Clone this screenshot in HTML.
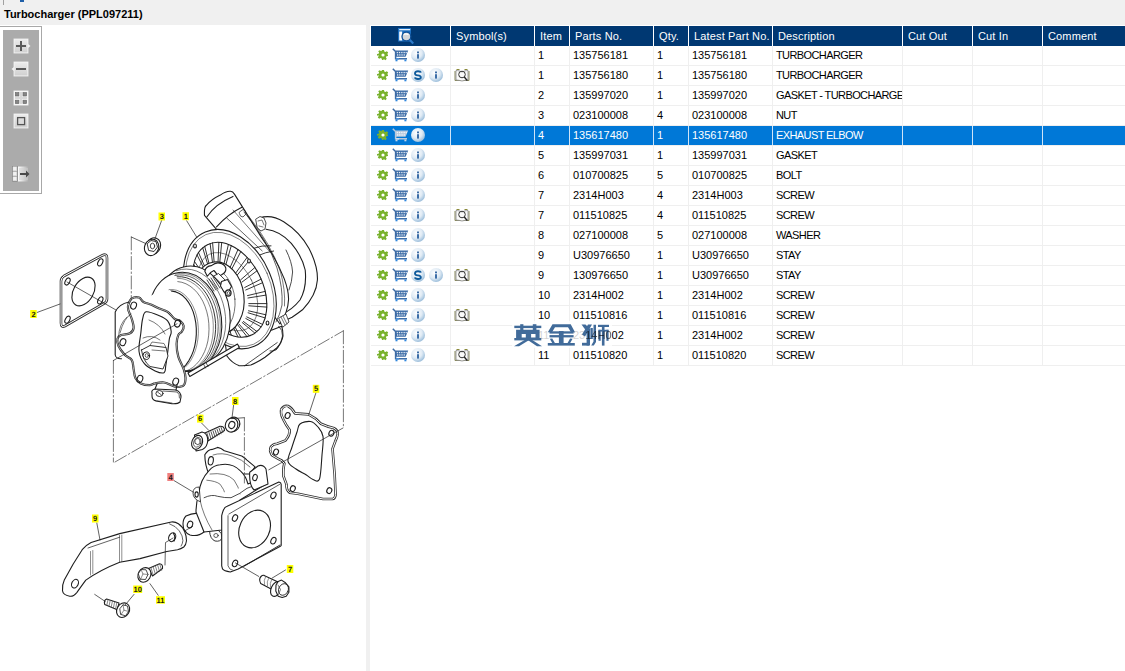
<!DOCTYPE html>
<html><head><meta charset="utf-8">
<style>
html,body{margin:0;padding:0;}
body{width:1125px;height:671px;position:relative;overflow:hidden;background:#f0f0f0;font-family:"Liberation Sans",sans-serif;}
.abs{position:absolute;}
#title{position:absolute;left:4px;top:8px;font-size:11px;font-weight:bold;color:#000;letter-spacing:0px;white-space:nowrap;}
#left{position:absolute;left:0;top:25px;width:366px;height:646px;background:#fff;overflow:hidden;}
#right{position:absolute;left:370px;top:25px;width:755px;height:646px;background:#fff;}
.hc{position:absolute;top:26px;height:20px;background:#003872;color:#fff;font-size:11px;line-height:20px;padding-left:5px;letter-spacing:0.15px;box-sizing:border-box;white-space:nowrap;overflow:hidden;}
.tc{position:absolute;height:19px;font-size:11px;line-height:19px;color:#000;padding-left:3px;box-sizing:border-box;white-space:nowrap;overflow:hidden;}
.sw{color:#fff;}
.rl{position:absolute;left:371px;width:754px;height:1px;background:#efefef;}
.sel{position:absolute;left:371px;width:754px;height:19px;background:#0078d7;}
.vl{position:absolute;top:46px;height:319px;width:1px;background:#efefef;}
.vls{position:absolute;top:126px;height:19px;width:1px;background:#d0e4f7;}
.ic{position:absolute;overflow:visible;}
</style></head><body>
<svg width="0" height="0" style="position:absolute">
<defs>
<radialGradient id="cg" cx="40%" cy="35%" r="65%">
<stop offset="0" stop-color="#ffffff"/><stop offset="0.6" stop-color="#dfeaf4"/><stop offset="1" stop-color="#9fc0dc"/>
</radialGradient>
<g id="gear">
<path fill="#79b22e" d="M4 0h2l.3 1.6 1.2.5 1.3-.9 1.4 1.4-.9 1.3.5 1.2L10 4v2l-1.6.3-.5 1.2.9 1.3-1.4 1.4-1.3-.9-1.2.5L6 10H4l-.3-1.6-1.2-.5-1.3.9L-.2 7.4l.9-1.3-.5-1.2L-1 6V4l1.6-.3.5-1.2-.9-1.3L1.6.2l1.3.9 1.2-.5z"/>
<circle cx="5" cy="5" r="1.6" fill="#fff"/>
</g>
<g id="cart">
<path d="M0.8 0.8 L3 3" stroke="#3a6aa5" stroke-width="1.5" fill="none"/>
<path d="M2.6 2.6 H16.2 L13.6 8.8 H4 Z" fill="#3d6ca6"/>
<g fill="#e8eef6">
<rect x="4.6" y="3.9" width="1.3" height="1.3"/><rect x="6.9" y="3.9" width="1.3" height="1.3"/><rect x="9.2" y="3.9" width="1.3" height="1.3"/><rect x="11.5" y="3.9" width="1.3" height="1.3"/><rect x="13.6" y="3.9" width="1.2" height="1.3"/>
<rect x="5" y="6.3" width="1.3" height="1.3"/><rect x="7.2" y="6.3" width="1.3" height="1.3"/><rect x="9.4" y="6.3" width="1.3" height="1.3"/><rect x="11.6" y="6.3" width="1.3" height="1.3"/>
</g>
<path d="M3.6 3 V10.8 H15" stroke="#3d6ca6" stroke-width="1.5" fill="none"/>
<path d="M4 10.8 H7" stroke="#4a90d8" stroke-width="1.5"/>
<rect x="3.5" y="11.5" width="2" height="1.8" fill="#2f86dc"/>
<rect x="12.4" y="11.5" width="2" height="1.8" fill="#2f86dc"/>
</g>
<g id="cartS">
<path d="M0.8 0.8 L3 3" stroke="#b8c8dc" stroke-width="1.5" fill="none"/>
<path d="M2.6 2.6 H16.2 L13.6 8.8 H4 Z" fill="#b8c8dc"/>
<g fill="#f4f8fc">
<rect x="4.6" y="3.9" width="1.3" height="1.3"/><rect x="6.9" y="3.9" width="1.3" height="1.3"/><rect x="9.2" y="3.9" width="1.3" height="1.3"/><rect x="11.5" y="3.9" width="1.3" height="1.3"/><rect x="13.6" y="3.9" width="1.2" height="1.3"/>
<rect x="5" y="6.3" width="1.3" height="1.3"/><rect x="7.2" y="6.3" width="1.3" height="1.3"/><rect x="9.4" y="6.3" width="1.3" height="1.3"/><rect x="11.6" y="6.3" width="1.3" height="1.3"/>
</g>
<path d="M3.6 3 V10.8 H15" stroke="#b8c8dc" stroke-width="1.5" fill="none"/>
<path d="M4 10.8 H7" stroke="#d0dcea" stroke-width="1.5"/>
<rect x="3.5" y="11.5" width="2" height="1.8" fill="#c8d6e6"/>
<rect x="12.4" y="11.5" width="2" height="1.8" fill="#c8d6e6"/>
</g>
<g id="cI"><circle cx="7" cy="7" r="7" fill="url(#cg)"/><rect x="6.1" y="3.5" width="1.8" height="1.8" fill="#2a5f9e"/><rect x="6.1" y="6.2" width="1.8" height="4.4" fill="#2a5f9e"/></g>
<g id="cS"><circle cx="7" cy="7" r="7" fill="url(#cg)"/><path d="M9.8 4.6 Q9.5 3.2 7 3.2 Q4 3.2 4 5.4 Q4 7 6.8 7.4 Q9.8 7.8 9.8 9.2 Q9.8 11 7 11 Q4.2 11 4 9.4" fill="none" stroke="#0d5a9c" stroke-width="1.9"/></g>
<g id="book">
<path d="M1 3v9.5h14V3" fill="#eee" stroke="#8a8a5a" stroke-width="1"/>
<path d="M2.5 1.5h3M10.5 1.5h3" stroke="#8a8a3a" stroke-width="1"/>
<path d="M2 2.5c2 0 4 .5 6 1.5 2-1 4-1.5 6-1.5v9.5c-2 0-4 .5-6 1-2-.5-4-1-6-1z" fill="#fafafa" stroke="#888" stroke-width=".8"/>
<circle cx="8" cy="6.5" r="3.3" fill="none" stroke="#333" stroke-width="1"/>
<path d="M10.3 9l3 3.6" stroke="#222" stroke-width="1.4"/>
</g>
</defs></svg>

<div class="abs" style="left:3px;top:0;width:1px;height:5px;background:#a0a0a0"></div>
<div class="abs" style="left:20px;top:0;width:4px;height:2px;background:#1f5fa8"></div>
<div id="title">Turbocharger (PPL097211)</div>
<div id="left">
<svg style="position:absolute;left:0;top:-25px" width="366" height="671" viewBox="0 0 366 671">
<g fill="none" stroke="#1e1e1e" stroke-width="1.1" stroke-linejoin="round" stroke-linecap="round">
<path fill="#fff" d="M259.6 218 Q271 214 283.7 221.7 Q300 232 309 248.4 Q318 266 317.4 280 Q316.5 295 302.5 309.8 Q297 314 292.1 317.3 L284 321 L270 340 L230 300 L230 240 Z" stroke="none"/>
<path d="M259.6 218 Q271 214 283.7 221.7 Q300 232 309 248.4 Q318 266 317.4 280 Q316.5 295 302.5 309.8 Q297 314 292.1 317.3 L284 321"/>
<path d="M266 229.3 Q280 231 291.3 243.3 Q302 256 305.2 270 Q307 288 300 300 Q292 310 282 314"/>
<path d="M286 250 Q292 262 292.6 272 Q292 282 289 290" stroke-width="0.8"/>
<path fill="#fff" d="M256 219 L260 216.5 L264 218 L266 223 L265 229 L261 231 L257.5 228 Z" stroke-width="0.8"/>
<path d="M258 221 L262 220 L264 225 M259 226 L263 227" stroke-width="0.6"/>
<path fill="#fff" d="M204.5 215.4 Q204 207 206.4 205.3 Q212 199 220.3 195.1 Q226 191 230.5 191.3 Q233 191.5 234.3 193.9 L261.3 237.1 Q276 258 284.3 278.9 Q289 292 288.5 300 Q288 312 280 324 L262 300 L216.5 229.3 Z"/>
<path d="M244 212 Q268 240 277 268 Q283 288 282 305 Q280 315 276 322" stroke-width="0.7"/>
<path d="M248.5 216 Q271 244 280.5 272 Q285.5 290 284.5 306" stroke-width="0.6"/>
<path d="M207 216.7 Q215 204 233 196.4"/>
<path d="M216.5 226.8 Q228 214 241.9 207.2"/>
<path d="M226.7 218 L262.2 250.9" stroke-width="0.7"/>
<path d="M233 210 L270 252" stroke-width="0.6"/>
<path d="M239.5 212 L243 209.5 Q246 210 246 214 L243 217 Q240 217 239.5 214 Z" stroke-width="0.7"/>
<path d="M253.3 248.4 Q262 245 271 245.8 M257 256 Q266 252 273.6 251" stroke-width="0.9"/>
<path fill="#fff" d="M224.5 337 L226.9 356 Q232 363 238.8 365.6 Q245 366 250.8 365 Q258 362 265 357.2 L277 347.7 Q282 342 283 335.8 Q283 330 281.7 326.2 L272 330 Z"/>
<path d="M244.5 365.8 L277.2 342.6 M270 351 Q276 352 279 346" stroke-width="0.8"/>
<path d="M278.7 326.2 Q283 330 282.5 336 Q282 344 276 350" stroke-width="0.8"/>
<path fill="#fff" d="M279 318 L286 314 L289 322 L283 327 Z" stroke-width="0.8"/>
<path d="M281 317 L285 325 M283 316 L287 324" stroke-width="0.6"/>
<ellipse cx="229.8" cy="289.1" rx="42.9" ry="62.2" transform="rotate(-23.2 229.8 289.1)" fill="#fff"/>
<ellipse cx="229.8" cy="289.4" rx="40.6" ry="59.8" transform="rotate(-23.6 229.8 289.4)" stroke-width="0.5"/>
<ellipse cx="229.8" cy="289.7" rx="32.9" ry="50.3" transform="rotate(-26.4 229.8 289.7)" fill="#fff"/>
<path d="M194.5 288.0 L204.1 291.8 M193.7 284.3 L203.6 289.4 M192.8 275.8 L202.8 283.8 M192.8 272.3 L202.8 281.6 M193.7 264.6 L203.1 276.6 M194.5 261.5 L203.5 274.6 M197.1 255.0 L204.9 270.5 M198.5 252.6 L205.8 268.9 M202.7 247.9 L208.2 265.9 M204.7 246.3 L209.4 264.9 M210.1 243.5 L212.6 263.3 M212.6 242.8 L214.2 262.9 M218.9 242.4 L218.0 262.8 M221.7 242.6 L219.7 263.0 M228.4 244.4 L223.9 264.3 M231.3 245.6 L225.7 265.2 M238.0 249.5 L229.9 267.9 M240.8 251.6 L231.6 269.3 M247.1 257.4 L235.6 273.2 M249.6 260.2 L237.2 275.1 M254.9 267.5 L240.6 279.9 M257.0 270.8 L242.0 282.1 M261.1 279.1 L244.7 287.5 M262.6 282.7 L245.7 290.0 M265.1 291.4 L247.5 295.6 M265.9 295.1 L248.0 298.0 M266.8 303.6 L248.8 303.6 M266.8 307.1 L248.8 305.8 M265.9 314.8 L248.5 310.8 M265.1 317.9 L248.1 312.8 M262.5 324.4 L246.7 316.9 M261.1 326.8 L245.8 318.5 M256.9 331.5 L243.4 321.5 M254.9 333.1 L242.2 322.5 M249.5 335.9 L239.0 324.1 M247.0 336.6 L237.4 324.5 M240.7 337.0 L233.6 324.6 M237.9 336.8 L231.9 324.4 M231.2 335.0 L227.7 323.1 M228.3 333.8 L225.9 322.2 M221.6 329.9 L221.7 319.5 M218.8 327.8 L220.0 318.1 M212.5 322.0 L216.0 314.2 M210.0 319.2 L214.4 312.3 M204.7 311.9 L211.0 307.5 M202.6 308.6 L209.6 305.3 M198.5 300.3 L206.9 299.9 M197.0 296.7 L205.9 297.4" stroke-width="0.9"/>
<ellipse cx="227.8" cy="291.7" rx="26.32" ry="41.748999999999995" transform="rotate(-26.4 227.8 291.7)" stroke-width="0.5"/>
<ellipse cx="218.2" cy="297.9" rx="25.8" ry="36.1" transform="rotate(-6.7 218.2 297.9)" fill="#fff"/>
<ellipse cx="213" cy="301" rx="22" ry="33" transform="rotate(-5 213 301)" stroke-width="0.6"/>
<ellipse cx="195" cy="246" rx="1.4" ry="2" fill="#fff"/>
<ellipse cx="249" cy="261" rx="1.4" ry="2" fill="#fff"/>
<ellipse cx="267.5" cy="323" rx="1.4" ry="2" fill="#fff"/>
<ellipse cx="193" cy="315.5" rx="37" ry="49.6" transform="rotate(-6.7 193 315.5)" fill="#fff"/>
<path d="M176.4 270.7 L181.4 269.4 L186.5 269.1 L191.6 269.6 L196.7 271.1 L201.6 273.5 L206.3 276.8 L210.6 280.8 L214.5 285.6 L217.9 291.0 L220.8 296.9 L223.0 303.3 L224.6 309.9 L225.5 316.7 L225.7 323.5 L225.2 330.2 L223.9 336.8 L222.0 342.9 L219.5 348.6 L216.4 353.7 L212.7 358.2 L208.6 361.9 L204.1 364.7 L199.3 366.7 L194.3 367.8" stroke-width="0.6"/>
<ellipse cx="184.6" cy="321.7" rx="37" ry="49.6" transform="rotate(-6.7 184.6 321.7)" fill="#fff"/>
<path d="M175.3 274.1 L180.2 273.4 L185.3 273.7 L190.3 274.8 L195.2 276.9 L199.8 279.9 L204.2 283.7 L208.2 288.2 L211.7 293.3 L214.7 299.1 L217.0 305.2 L218.8 311.7 L219.9 318.4 L220.3 325.1 L220.0 331.8 L219.0 338.4 L217.3 344.6 L215.0 350.4 L212.1 355.6 L208.6 360.3 L204.7 364.2 L200.4 367.3 L195.8 369.5 L190.9 370.9 L185.9 371.3" stroke-width="0.5"/>
<path d="M174.8 275.5 L179.6 274.9 L184.5 275.2 L189.4 276.4 L194.2 278.5 L198.7 281.5 L202.9 285.3 L206.8 289.8 L210.1 294.9 L213.0 300.6 L215.3 306.7 L216.9 313.1 L217.9 319.7 L218.2 326.3 L217.9 333.0 L216.8 339.4 L215.1 345.5 L212.8 351.2 L210.0 356.3 L206.6 360.9 L202.7 364.7 L198.5 367.7 L193.9 369.8 L189.1 371.1 L184.3 371.5" stroke-width="0.7"/>
<path d="M177.1 276.8 L181.7 276.8 L186.3 277.7 L190.9 279.5 L195.2 282.0 L199.3 285.3 L203.1 289.3 L206.5 293.9 L209.4 299.1 L211.8 304.8 L213.7 310.8 L214.9 317.0 L215.6 323.4 L215.6 329.7 L215.0 336.0 L213.8 342.1 L212.0 347.8 L209.7 353.1 L206.8 357.9 L203.5 362.1 L199.7 365.6 L195.7 368.4 L191.3 370.3 L186.8 371.4 L182.2 371.7" stroke-width="0.9"/>
<path d="M177.6 278.4 L182.0 278.7 L186.4 279.8 L190.7 281.8 L194.9 284.5 L198.7 287.9 L202.2 291.9 L205.3 296.6 L208.0 301.8 L210.2 307.3 L211.8 313.2 L212.9 319.3 L213.3 325.6 L213.2 331.8 L212.5 337.8 L211.3 343.7 L209.4 349.2 L207.1 354.3 L204.2 358.9 L201.0 362.9 L197.3 366.3 L193.4 368.9 L189.2 370.7 L184.8 371.7 L180.4 371.9" stroke-width="0.5"/>
<path d="M177.8 281.6 L181.9 282.3 L186.0 283.8 L189.9 286.0 L193.6 288.9 L197.0 292.4 L200.1 296.6 L202.8 301.2 L205.0 306.3 L206.8 311.8 L208.1 317.5 L208.8 323.3 L209.0 329.3 L208.7 335.2 L207.9 340.9 L206.5 346.4 L204.6 351.6 L202.2 356.4 L199.5 360.6 L196.3 364.3 L192.9 367.4 L189.1 369.7 L185.2 371.3 L181.1 372.2 L177.0 372.3" stroke-width="0.6"/>
<path d="M169.1 289.6 L173.0 289.6 L176.8 290.3 L180.5 291.9 L184.0 294.3 L187.2 297.4 L190.2 301.2 L192.7 305.6 L194.9 310.5 L196.5 315.8 L197.7 321.5 L198.3 327.3 L198.4 333.3 L197.9 339.2 L196.9 344.9 L195.4 350.4 L193.4 355.5 L191.0 360.1 L188.2 364.1 L185.0 367.4 L181.6 370.1 L177.9 371.9 L174.2 373.0 L170.3 373.2 L166.5 372.6" stroke-width="0.5"/>
<path d="M168.5 291.1 L172.2 291.1 L175.9 291.9 L179.4 293.5 L182.8 295.8 L185.9 298.9 L188.7 302.7 L191.2 307.1 L193.2 311.9 L194.7 317.2 L195.8 322.8 L196.3 328.5 L196.3 334.4 L195.8 340.2 L194.8 345.8 L193.3 351.1 L191.3 356.1 L188.9 360.6 L186.1 364.6 L183.1 367.8 L179.7 370.4 L176.1 372.2 L172.5 373.2 L168.8 373.4 L165.1 372.7"/>
<path d="M207 280 L214 291 M209 279 L216 290 M211 278 L218 289 M213 277 L220 288" stroke-width="0.9" stroke="#333"/>
<path fill="#fff" d="M204.8 271.3 Q206 266 211.4 265.6 Q216 262 219.6 263.1 Q224.5 264 225.8 268 Q226.5 272 222 274.6 L218.5 276.5 Q215.5 272 213.9 270.5 Q210 272 207.3 276.2 Z"/>
<path fill="#fff" d="M213.9 276 L218.5 273.5 L225.6 280.5 L221.5 283.5 Z" stroke-width="0.9"/>
<path fill="#fff" d="M221.5 281.5 L227.5 279.5 L231.5 286.5 L228.5 291.5 L224 292 L220.5 286 Z"/>
<ellipse cx="228.3" cy="293" rx="2.8" ry="3.1" transform="rotate(0 228.3 293)" fill="#fff"/>
<ellipse cx="228.6" cy="293.2" rx="1.4" ry="1.6" transform="rotate(0 228.6 293.2)" stroke-width="0.7"/>
<path fill="#fff" d="M188 373 L237.5 344 L239.3 347.5 L189.8 376.5 Z"/>
<path d="M206 362.5 L208 366.5 M203.5 364 L205.5 368" stroke-width="0.7"/>
<path fill="#fff" stroke="none" d="M115.2 312 Q116 306 122 304 L150 296 Q160 290 170 290 L178 300 L178 350 L121.5 358.7 Q116 359 115.2 355 Z"/>
<path d="M128.3 304.7 C128.9 302.8 130.0 299.6 131.8 298.4 C133.6 297.2 137.1 296.9 139.0 297.5 C140.9 298.1 141.4 300.8 143.5 302.0 C145.6 303.2 149.0 303.6 151.5 304.7 C154.0 305.8 156.0 307.1 158.7 308.3 C161.4 309.5 164.9 310.0 167.6 311.8 C170.3 313.6 172.7 317.5 174.8 319.0 C176.9 320.5 178.6 319.6 180.1 320.8 C181.6 322.0 183.4 324.3 183.7 326.1 C184.0 327.9 182.8 330.0 181.9 331.5 C181.0 333.0 179.2 333.0 178.3 335.1 C177.4 337.2 176.6 340.4 176.6 344.0 C176.6 347.6 177.1 352.4 178.3 356.6 C179.5 360.8 182.5 365.5 183.7 369.1 C184.9 372.7 185.5 375.3 185.5 378.0 C185.5 380.7 185.2 383.7 183.7 385.2 C182.2 386.7 178.7 387.0 176.6 387.0 C174.5 387.0 173.3 385.9 171.2 385.2 C169.1 384.4 166.7 382.8 164.0 382.5 C161.3 382.2 157.5 382.9 155.1 383.4 C152.7 383.8 152.1 385.2 149.7 385.2 C147.3 385.2 143.2 384.6 140.8 383.4 C138.4 382.2 136.6 380.4 135.4 378.0 C134.2 375.6 134.2 372.1 133.6 369.1 C133.0 366.1 133.3 362.5 131.8 360.1 C130.3 357.7 126.9 357.2 124.7 354.8 C122.5 352.4 119.6 348.5 118.4 345.8 C117.2 343.1 117.0 340.5 117.5 338.7 C118.0 336.9 119.0 336.0 121.1 335.1 C123.2 334.2 127.9 334.5 130.0 333.3 C132.1 332.1 133.3 330.4 133.6 328.0 C133.9 325.6 132.7 322.0 131.8 319.0 C130.9 316.0 128.9 312.4 128.3 310.0 C127.7 307.6 127.7 306.6 128.3 304.7 Z" fill="#fff" stroke="#2a2a2a" stroke-width="2.2"/>
<path d="M128.3 304.7 C128.9 302.8 130.0 299.6 131.8 298.4 C133.6 297.2 137.1 296.9 139.0 297.5 C140.9 298.1 141.4 300.8 143.5 302.0 C145.6 303.2 149.0 303.6 151.5 304.7 C154.0 305.8 156.0 307.1 158.7 308.3 C161.4 309.5 164.9 310.0 167.6 311.8 C170.3 313.6 172.7 317.5 174.8 319.0 C176.9 320.5 178.6 319.6 180.1 320.8 C181.6 322.0 183.4 324.3 183.7 326.1 C184.0 327.9 182.8 330.0 181.9 331.5 C181.0 333.0 179.2 333.0 178.3 335.1 C177.4 337.2 176.6 340.4 176.6 344.0 C176.6 347.6 177.1 352.4 178.3 356.6 C179.5 360.8 182.5 365.5 183.7 369.1 C184.9 372.7 185.5 375.3 185.5 378.0 C185.5 380.7 185.2 383.7 183.7 385.2 C182.2 386.7 178.7 387.0 176.6 387.0 C174.5 387.0 173.3 385.9 171.2 385.2 C169.1 384.4 166.7 382.8 164.0 382.5 C161.3 382.2 157.5 382.9 155.1 383.4 C152.7 383.8 152.1 385.2 149.7 385.2 C147.3 385.2 143.2 384.6 140.8 383.4 C138.4 382.2 136.6 380.4 135.4 378.0 C134.2 375.6 134.2 372.1 133.6 369.1 C133.0 366.1 133.3 362.5 131.8 360.1 C130.3 357.7 126.9 357.2 124.7 354.8 C122.5 352.4 119.6 348.5 118.4 345.8 C117.2 343.1 117.0 340.5 117.5 338.7 C118.0 336.9 119.0 336.0 121.1 335.1 C123.2 334.2 127.9 334.5 130.0 333.3 C132.1 332.1 133.3 330.4 133.6 328.0 C133.9 325.6 132.7 322.0 131.8 319.0 C130.9 316.0 128.9 312.4 128.3 310.0 C127.7 307.6 127.7 306.6 128.3 304.7 Z" stroke="#fff" stroke-width="0.6"/>
<ellipse cx="133.6" cy="305.6" rx="2.8" ry="3.6" transform="rotate(20 133.6 305.6)" />
<ellipse cx="122.9" cy="342.2" rx="2.8" ry="3.6" transform="rotate(20 122.9 342.2)" />
<ellipse cx="177.5" cy="323.5" rx="2.8" ry="3.6" transform="rotate(20 177.5 323.5)" />
<ellipse cx="139.9" cy="378.9" rx="2.8" ry="3.6" transform="rotate(20 139.9 378.9)" />
<ellipse cx="175.7" cy="381.6" rx="2.8" ry="3.6" transform="rotate(20 175.7 381.6)" />
<path d="M146.1 311.8 C148.8 311.2 155.1 313.9 158.7 315.4 C162.3 316.9 165.5 318.1 167.6 320.8 C169.7 323.5 170.9 328.5 171.2 331.5 C171.5 334.5 170.0 335.1 169.4 338.7 C168.8 342.3 168.2 348.5 167.6 353.0 C167.0 357.5 166.4 362.2 165.8 365.5 C165.2 368.8 165.8 371.8 164.0 372.7 C162.2 373.6 158.4 372.4 155.1 370.9 C151.8 369.4 147.1 367.0 144.4 363.7 C141.7 360.4 139.6 356.3 139.0 351.2 C138.4 346.1 140.2 338.7 140.8 333.3 C141.4 327.9 141.7 322.6 142.6 319.0 C143.5 315.4 143.4 312.4 146.1 311.8 Z"/>
<path d="M149 320 Q160 324 165 334 M143 338 Q152 334 160 340" stroke-width="0.6"/>
<path fill="#fff" d="M141.5 350 L150 345.5 L166 347.5 L168 356 L163 369 L150 366.5 Q143 361 141.5 350 Z" stroke-width="0.9"/>
<path d="M150 345.5 L152 342 L164 343.5 L166 347.5 M152 350 L165 351" stroke-width="0.6"/>
<ellipse cx="146.3" cy="355.7" rx="3.3" ry="3.8" transform="rotate(0 146.3 355.7)" fill="#fff" stroke-width="1"/>
<ellipse cx="146.8" cy="355.5" rx="1.6" ry="1.9" transform="rotate(0 146.8 355.5)" stroke-width="0.7"/>
<path d="M120 333 Q124 318 131 314 M118.5 337 Q119 324 127 317" stroke-width="0.6"/>
<path d="M129 302 Q119 304 115.2 312 L115.2 355 Q116 359 121.5 358.7" />

<!-- gasket 2 -->
<path d="M64 276 L102 255.5 Q107 253 107 258 L107 299 Q107 302 104 303.5 L65 326 Q61 328 61 323 L61 281 Q61 278 64 276 Z" stroke-width="2.6" stroke="#333"/>
<path d="M64 276 L102 255.5 Q107 253 107 258 L107 299 Q107 302 104 303.5 L65 326 Q61 328 61 323 L61 281 Q61 278 64 276 Z" stroke="#fff" stroke-width="1.0"/>

<ellipse cx="67.5" cy="281.5" rx="2.2" ry="3.8" transform="rotate(28 67.5 281.5)"/>
<ellipse cx="100.3" cy="262.4" rx="2.2" ry="3.8" transform="rotate(28 100.3 262.4)"/>
<ellipse cx="100.3" cy="300.4" rx="2.2" ry="3.8" transform="rotate(28 100.3 300.4)"/>
<ellipse cx="67.5" cy="319.7" rx="2.2" ry="3.8" transform="rotate(28 67.5 319.7)"/>
<ellipse cx="83.5" cy="291.5" rx="10" ry="15.5" transform="rotate(30 83.5 291.5)"/>

<!-- nut 3 -->
<ellipse cx="153.5" cy="246" rx="7" ry="8.3" transform="rotate(20 153.5 246)" fill="#fff"/>
<ellipse cx="151.6" cy="247.4" rx="7" ry="8.3" transform="rotate(20 151.6 247.4)" fill="#fff"/>
<path d="M147.5 243.5 L151 240.5 L156 241.5 L157.5 247 L154 251.5 L149 250.5 Z" stroke-width="0.9"/>
<ellipse cx="152.5" cy="246" rx="2.2" ry="2.8" stroke-width="0.8"/>
<!-- drain flange -->
<path fill="#fff" d="M152 393 Q151 390 155 389 L176 390 Q181 392 181 397 L180 402 Q178 404 172 403.7 L156 401 Q152 400 152 396 Z"/>
<path d="M155 389 L157 384 M176 390 L177 385"/>
<ellipse cx="159.5" cy="393.5" rx="3.6" ry="3" stroke-width="0.9"/>
<path d="M157.5 392 L161.5 395 M163 391 L177 392 Q180 394 179.5 398" stroke-width="0.7"/>
<path d="M155 400.5 L172 403" stroke-width="0.6"/>

<!-- gasket 5 -->
<path d="M281.3 409.2 Q284 405 288 406 Q292 408 294.9 413.4 Q302 414 308.5 414.4 Q316 418 321 423.8 Q328 427 333.5 428 Q338 430 337.7 434.3 Q337 438 335.6 440.5 L332.5 448.9 L334.6 474 L335.6 494.8 Q335 499 332.5 499 L323 499 L298 493.8 L289.7 492.7 Q286 490 286.5 484.4 L283.4 476 Q283 468 284.4 463.5 Q282 460 279.2 459.3 L271.9 455.2 Q269 450 270.9 446.8 Q273 444 277.1 443.7 L285.5 440.5 Q290 435 289.7 430 Q286 425 283.4 419.7 Q280 414 281.3 409.2 Z" fill="#fff" stroke-width="2.6" stroke="#333"/>
<path d="M281.3 409.2 Q284 405 288 406 Q292 408 294.9 413.4 Q302 414 308.5 414.4 Q316 418 321 423.8 Q328 427 333.5 428 Q338 430 337.7 434.3 Q337 438 335.6 440.5 L332.5 448.9 L334.6 474 L335.6 494.8 Q335 499 332.5 499 L323 499 L298 493.8 L289.7 492.7 Q286 490 286.5 484.4 L283.4 476 Q283 468 284.4 463.5 Q282 460 279.2 459.3 L271.9 455.2 Q269 450 270.9 446.8 Q273 444 277.1 443.7 L285.5 440.5 Q290 435 289.7 430 Q286 425 283.4 419.7 Q280 414 281.3 409.2 Z" stroke="#fff" stroke-width="1.0"/>
<path d="M300.0 424.0 C302.2 422.2 307.5 421.0 310.5 421.5 C313.5 422.0 315.9 424.5 318.0 427.0 C320.1 429.5 322.3 431.7 323.0 436.4 C323.7 441.1 322.6 447.9 322.0 455.0 C321.4 462.1 321.0 474.9 319.5 479.0 C318.0 483.1 315.2 480.2 313.0 479.5 C310.8 478.8 309.2 476.8 306.4 475.0 C303.6 473.2 299.1 471.3 296.0 469.0 C292.9 466.7 288.7 465.1 288.0 461.4 C287.3 457.7 290.5 451.9 292.0 447.0 C293.5 442.1 295.7 435.8 297.0 432.0 C298.3 428.2 297.8 425.8 300.0 424.0 Z"/>
<ellipse cx="287.6" cy="415.5" rx="2.4" ry="3" transform="rotate(25 287.6 415.5)"/>
<ellipse cx="331.4" cy="433.2" rx="2.4" ry="3" transform="rotate(25 331.4 433.2)"/>
<ellipse cx="276" cy="452" rx="2.4" ry="3" transform="rotate(25 276 452)"/>
<ellipse cx="292.8" cy="488.6" rx="2.4" ry="3" transform="rotate(25 292.8 488.6)"/>
<ellipse cx="329.3" cy="490.6" rx="2.4" ry="3" transform="rotate(25 329.3 490.6)"/>

<!-- bolt 6 -->
<path fill="#fff" d="M203.8 433.6 L219.9 426.2 Q224.5 426 224.5 430.5 L207.9 441 Z"/>
<path d="M207 433.5 L209 439.8 M209 432.6 L211 438.8 M211 431.7 L213 437.8 M213 430.8 L215 436.8 M215 429.9 L217 435.8 M217 429 L219 434.8 M219 428.1 L221 433.8 M221 427.2 L222.8 432.6" stroke="#444" stroke-width="0.9"/>
<path fill="#fff" d="M194.5 435 L202 432 Q207.5 433 207.8 440 Q207.5 447 202.5 449.5 L196 451 Z"/>
<ellipse cx="197.1" cy="442.3" rx="5.2" ry="7.2" transform="rotate(22 197.1 442.3)" fill="#fff"/>
<ellipse cx="197.3" cy="442.3" rx="3.6" ry="5" transform="rotate(22 197.3 442.3)" stroke-width="0.6"/>
<path d="M195.2 440 L197.3 438.2 L199.8 439.4 L200 442.8 L197.9 444.8 L195.4 443.4 Z" stroke-width="0.8"/>

<!-- washer 8 -->
<ellipse cx="233.5" cy="424.2" rx="6.2" ry="7.2" transform="rotate(20 233.5 424.2)" fill="#fff"/>
<ellipse cx="231.6" cy="425" rx="6.2" ry="7.2" transform="rotate(20 231.6 425)" fill="#fff"/>
<ellipse cx="231.8" cy="425" rx="3" ry="3.6" transform="rotate(20 231.8 425)"/>

<!-- elbow 4 -->
<g fill="#fff">
<!-- lower-left boss (stay mount) -->
<path d="M186 516 Q194 512 200 514 L204 532 Q198 537 190 535 Q183 532 183 524 Q183 519 186 516 Z"/>
<ellipse cx="190" cy="524.5" rx="2.6" ry="3.4" transform="rotate(20 190 524.5)"/>
<!-- lower boss -->
<path d="M209.5 531 Q213 528 218 530 Q222.5 533 222 538 Q220.5 542 215 541 Q210 539 209.5 531 Z" stroke-width="0.9"/>
<ellipse cx="216" cy="535.5" rx="2.2" ry="2" stroke-width="0.7"/>
<!-- top flange -->
<path d="M204.8 454.8 Q208 449.5 212.2 449.4 L217.6 447.4 Q221 448 224.3 450.7 L231 452.7 L241.7 456.1 Q245 458 247 460.1 L255.1 466.8 L250 474 L209 474 Q205 466 204.8 454.8 Z"/>
<ellipse cx="210.8" cy="460.8" rx="2.5" ry="4.2" transform="rotate(10 210.8 460.8)"/>
<path d="M213 455 Q222 452 232 456 Q242 459 250 467" stroke-width="0.6"/>
<!-- dome body -->
<path d="M208.8 470.8 Q214 465 220.2 464.8 Q232 462.5 240.4 470.8 Q246 476 248 484 L262 478 L266 484 L240 500 L232 520 L222 530 L204 532 L196 512 Q196 503 198.8 493.6 Q200 480 208.8 470.8 Z"/>
<path d="M206.8 480.2 Q216 481 220.2 484.3 Q224 489 226 496" stroke-width="0.6"/>
<path d="M210 474 Q226 472 234 480 Q239 487 240 494" stroke-width="0.6"/>
<path d="M204.1 497.7 Q212 494 217.6 496.3 Q225 498 231 497.7 Q240 494 247 488.3 L264.5 481.6" stroke-width="0.8"/>
<path d="M200 500 Q203 515 212 530" stroke-width="0.6"/>
<!-- left bump -->
<path d="M198.8 487 Q193 487 193 493 Q193 499 200.1 501.7 Z" stroke-width="0.8"/>
<ellipse cx="196.6" cy="494.5" rx="1.6" ry="2.6"/>
<!-- right boss -->
<path d="M249.7 472.2 L258 466 Q263 464 266 469 L268 484 L254 490 Q249 485 249.7 472.2 Z"/>
<ellipse cx="255" cy="477.5" rx="2.2" ry="3.2" transform="rotate(15 255 477.5)"/>
<!-- square flange -->
<path d="M222.5 512.6 Q224 507 227.2 506.3 L278.9 482 Q281.2 482.5 281.2 484.4 L281.2 545.4 Q281 546 280.4 546.2 L238.2 568.9 L230.3 572 Q224 571 222.5 568.9 L221.7 565.8 L221.7 515.7 Z"/>
<path d="M228.8 514.1 L279.6 484.4 M228 515.7 L228 565.8 Q229 570 233.5 570.5" stroke-width="0.7"/>
</g>
<ellipse cx="273.4" cy="495.3" rx="2.4" ry="3.4" transform="rotate(25 273.4 495.3)"/>
<ellipse cx="235" cy="518" rx="2.4" ry="3.4" transform="rotate(25 235 518)"/>
<ellipse cx="273.4" cy="540.7" rx="2.4" ry="3.4" transform="rotate(25 273.4 540.7)"/>
<ellipse cx="235" cy="563.4" rx="2.4" ry="3.4" transform="rotate(25 235 563.4)"/>
<ellipse cx="254.6" cy="529" rx="15" ry="19.5" transform="rotate(25 254.6 529)"/>
<path d="M244.3 566 L280 545" stroke-width="0.9"/>

<!-- stay 9 -->
<path fill="#fff" d="M91.1 542.5 L119.7 533.6 L171.3 522 Q175 521.5 178.4 523.8 Q183 527 184.7 531.8 Q186.5 536 186.5 540.7 Q186 545 183.8 547 Q181 549 177.5 549.7 L166.8 551.5 L140 558.6 L119.7 562.2 Q100 570 85.8 580.1 Q80 588 76.8 592.6 Q73 597 69.7 596.2 Q63 595 62.5 590.8 Q62 585 64.3 580.1 L73.2 564 L82.2 549.7 Q86 545 91.1 542.5 Z"/>
<path d="M88 548 L119.7 537.2" stroke-width="0.7"/>
<path d="M169.5 523.8 Q176 526 179.3 530.9 Q183 536 182.9 540.7 Q182.5 544 181.1 546.1" stroke-width="0.7"/>
<path d="M90.5 551.5 V575 M92.8 550.5 V573.5 M119.5 535.4 V562.2 M121.8 535 V561.5" stroke-width="0.5"/>
<ellipse cx="75" cy="583.7" rx="3.2" ry="4.5" transform="rotate(25 75 583.7)"/>
<ellipse cx="172.2" cy="537.2" rx="3.3" ry="4.6" transform="rotate(25 172.2 537.2)"/>
<path d="M173.5 533.5 Q176 537 174 541" stroke-width="1.2"/>

<!-- bolt 11 -->
<path fill="#fff" d="M148.5 568.5 L159.5 563.8 Q163 564 162.5 568.5 L152.5 576 Z"/>
<path d="M151 567.8 L153 574.6 M153.2 566.9 L155.2 573.6 M155.4 566 L157.4 572.6 M157.6 565 L159.6 571.6 M159.8 564.2 L161.6 570.4" stroke="#555" stroke-width="0.7"/>
<ellipse cx="144.4" cy="574.9" rx="6.2" ry="7.6" transform="rotate(30 144.4 574.9)" fill="#fff"/>
<path d="M138.5 573.5 L141 569.5 L146 569.8 L148 574.5 L145.5 579.5 L140.5 579.2 Z" fill="#fff" stroke-width="0.8"/>
<path d="M141 569.5 L143 574 L140.5 579.2 M143 574 L148 574.5" stroke-width="0.5"/>
<!-- bolt 10 -->
<path fill="#fff" d="M106.6 599.1 L119 603 L117.3 609.8 L104.7 604.4 Q103.5 600.5 106.6 599.1 Z"/>
<path d="M108 599.8 L106.8 605.3 M110.2 600.5 L109 606.2 M112.4 601.3 L111.2 607.1 M114.6 602 L113.4 608 M116.8 602.7 L115.6 608.9" stroke="#555" stroke-width="0.7"/>
<ellipse cx="123.1" cy="610.2" rx="6.2" ry="7.6" transform="rotate(30 123.1 610.2)" fill="#fff"/>
<path d="M120 608.5 L123 604.8 L127.5 606 L128.5 611.5 L125.5 615.8 L121 614.5 Z" fill="#fff" stroke-width="0.8"/>
<path d="M123 604.8 L124 610.2 L121 614.5 M124 610.2 L128.5 611.5" stroke-width="0.5"/>
<!-- bolt 7 -->
<path fill="#fff" d="M264.1 575.4 L277 581.4 L273 590 L260.7 583.5 Q258.5 579 261 576.5 Q262.5 575 264.1 575.4 Z"/>
<path d="M265.5 577 Q263.5 580 264.5 584.5 M268.5 578.5 Q266.5 581.5 267.5 586 M271.5 580 Q269.5 583 270.5 587.5" stroke="#666" stroke-width="0.7"/>
<ellipse cx="276" cy="589" rx="4.8" ry="7.8" transform="rotate(25 276 589)" fill="#fff"/>
<path fill="#fff" d="M278.2 581.4 L281.5 580.1 L285.5 582.8 L288.9 586.8 L288.9 592.2 L286.2 596.2 L282.2 597.5 L278.2 596.2 L275.8 591 L276 585 Z"/>
<ellipse cx="283.5" cy="589.5" rx="4.8" ry="6" transform="rotate(25 283.5 589.5)" stroke-width="0.8"/>
<path d="M278 585 L280.5 589.5 L278.5 594.5" stroke-width="0.6"/>
<!-- dashed construction box -->
<g stroke="#555" stroke-width="0.8" stroke-dasharray="13 2.5 1.5 2.5">
<path d="M131.3 237 V300"/>
<path d="M113.4 360.5 V462"/>
<path d="M115 462 L343.4 330.8"/>
<path d="M343.4 330.8 V428"/>
<path d="M244.4 418 V483"/>
</g>
<path d="M131.3 237 L145.6 243.5" stroke-width="0.7"/>
<path d="M113.4 360.5 L177 323.8" stroke-width="0.7"/>
<path d="M67 282 L116 310" stroke-width="0.7"/>
<path d="M231.9 418.6 L244.4 417.7" stroke-width="0.7"/>
<path d="M343 428 L268.8 469.8" stroke-width="0.7"/>
<path d="M235.4 562.9 L258.7 576.4" stroke-width="0.7"/>
<path d="M173 538 L165.5 542.5 L165 565" stroke-width="0.7"/>
<path d="M94.7 594.4 L105.4 601.6" stroke-width="0.7"/>
<path d="M184.7 530.9 L192.7 526.4" stroke-width="0.7"/>

<!-- leader lines -->
<g stroke-width="0.7">
<path d="M37 312.5 L60 304"/>
<path d="M161.7 220.2 L154.5 240"/>
<path d="M186.7 220.8 L196.6 236.9"/>
<path d="M316 392.6 L308.8 414.5"/>
<path d="M201.5 423 L208.6 430.2"/>
<path d="M233.6 405.2 L231.9 418.6"/>
<path d="M174.2 480.7 L193.4 492.2"/>
<path d="M285.5 570 L272.1 578.1"/>
<path d="M96.8 522.9 L100 539.9"/>
<path d="M150 583.7 L158.2 595.3"/>
<path d="M134 594.4 L125.1 605.1"/>
</g>

</g>

<!-- labels -->
<g font-family="Liberation Sans" font-size="7.5" font-weight="bold" text-anchor="middle" fill="#1a1a1a" style="text-rendering:geometricPrecision">
<rect x="30.2" y="310" width="6.5" height="8" fill="#ffff00"/><text x="33.5" y="316.5">2</text>
<rect x="158.5" y="212.5" width="6.5" height="8" fill="#ffff00"/><text x="161.8" y="219">3</text>
<rect x="182.5" y="212.2" width="6.5" height="8" fill="#ffff00"/><text x="185.8" y="218.7">1</text>
<rect x="312.8" y="384.8" width="6.5" height="8" fill="#ffff00"/><text x="316" y="391.3">5</text>
<rect x="197" y="414.6" width="6.5" height="8" fill="#ffff00"/><text x="200.2" y="421.1">6</text>
<rect x="232" y="397" width="6.5" height="8" fill="#ffff00"/><text x="235.2" y="403.5">8</text>
<rect x="167.3" y="473" width="6.5" height="8" fill="#f07f7f"/><text x="170.5" y="479.5">4</text>
<rect x="92" y="514.5" width="6.5" height="8" fill="#ffff00"/><text x="95.2" y="521">9</text>
<rect x="286.8" y="565" width="6.5" height="8" fill="#ffff00"/><text x="290" y="571.5">7</text>
<rect x="133.2" y="585.5" width="9" height="7.5" fill="#ffff00"/><text x="137.7" y="591.8">10</text>
<rect x="156" y="596.2" width="9" height="7.5" fill="#ffff00"/><text x="160.5" y="602.5">11</text>
</g>
</svg>

</div>
<div id="right"></div>
<!-- toolbar -->
<div class="abs" style="left:0;top:26px;width:42px;height:168px;border:1px solid #a8a8a8;border-left:none;box-sizing:border-box;background:#fff"></div>
<div class="abs" style="left:3px;top:30px;width:36px;height:161px;background:#ababab"></div>
<svg class="abs" style="left:0;top:0" width="44" height="200" viewBox="0 0 44 200">
<defs>
<linearGradient id="bg1" x1="0" y1="0" x2="0" y2="1"><stop offset="0" stop-color="#ececec"/><stop offset="1" stop-color="#cfcfcf"/></linearGradient>
<filter id="sh" x="-30%" y="-30%" width="160%" height="160%"><feGaussianBlur stdDeviation="0.6"/></filter>
</defs>
<g>
<rect x="13.5" y="38.5" width="15" height="15" fill="#8a8a8a" filter="url(#sh)"/>
<rect x="14" y="39" width="14" height="14" fill="url(#bg1)" stroke="#f6f6f6" stroke-width="1"/>
<path d="M28 44 L30.5 46 L28 48 Z" fill="#f4f4f4"/>
<rect x="16" y="45" width="10" height="2" fill="#5a5a5a"/><rect x="20" y="41" width="2" height="10" fill="#5a5a5a"/>

<rect x="13.5" y="61.5" width="15" height="15" fill="#8a8a8a" filter="url(#sh)"/>
<rect x="14" y="62" width="14" height="14" fill="url(#bg1)" stroke="#f6f6f6" stroke-width="1"/>
<path d="M14 67 L11.5 69 L14 71 Z" fill="#f4f4f4"/>
<rect x="16" y="68" width="10" height="2" fill="#5a5a5a"/>

<rect x="13.5" y="90.5" width="15" height="15" fill="#8a8a8a" filter="url(#sh)"/>
<rect x="14" y="91" width="14" height="14" fill="#f2f2f2" stroke="#fafafa" stroke-width="1"/>
<rect x="15" y="97" width="12" height="2" fill="#d8d8d8"/><rect x="20" y="92" width="2" height="12" fill="#d8d8d8"/>
<rect x="15.3" y="92.6" width="3.6" height="3.4" fill="#858585" stroke="#666" stroke-width="0.6"/>
<rect x="23" y="92.6" width="3.6" height="3.4" fill="#858585" stroke="#666" stroke-width="0.6"/>
<rect x="15.3" y="100.2" width="3.6" height="3.4" fill="#858585" stroke="#666" stroke-width="0.6"/>
<rect x="23" y="100.2" width="3.6" height="3.4" fill="#858585" stroke="#666" stroke-width="0.6"/>

<rect x="13.5" y="113.5" width="15" height="15" fill="#8a8a8a" filter="url(#sh)"/>
<rect x="14" y="114" width="14" height="14" fill="url(#bg1)" stroke="#f6f6f6" stroke-width="1"/>
<rect x="17.6" y="117.6" width="7" height="7" fill="#dcdcdc" stroke="#555" stroke-width="1.3"/>

<rect x="12.3" y="166" width="5.2" height="15.5" fill="#777" filter="url(#sh)"/>
<rect x="13" y="166.8" width="3.8" height="4" fill="#f2f2f2" stroke="#ddd" stroke-width="0.5"/>
<rect x="13" y="171.8" width="3.8" height="4" fill="#f2f2f2" stroke="#ddd" stroke-width="0.5"/>
<rect x="13" y="176.8" width="3.8" height="4" fill="#f2f2f2" stroke="#ddd" stroke-width="0.5"/>
<linearGradient id="fade" x1="0" y1="0" x2="1" y2="0"><stop offset="0" stop-color="#fdfdfd"/><stop offset="0.5" stop-color="#d8d8d8"/><stop offset="1" stop-color="#ababab"/></linearGradient>
<rect x="18" y="166.5" width="10.5" height="15" fill="url(#fade)"/>
<rect x="19" y="168" width="9" height="12" fill="#cfcfcf" opacity="0.5"/>
<path d="M20 173 H26 V170.5 L29.5 174 L26 177.5 V175 H20 Z" fill="#4a4a4a"/>
</g>
</svg>
<div class="hc" style="left:371px;width:79px"></div><div class="hc" style="left:451px;width:83px">Symbol(s)</div><div class="hc" style="left:535px;width:34px">Item</div><div class="hc" style="left:570px;width:83px">Parts No.</div><div class="hc" style="left:654px;width:34px">Qty.</div><div class="hc" style="left:689px;width:83px">Latest Part No.</div><div class="hc" style="left:773px;width:129px">Description</div><div class="hc" style="left:903px;width:69px">Cut Out</div><div class="hc" style="left:973px;width:69px">Cut In</div><div class="hc" style="left:1043px;width:82px">Comment</div>
<svg class="abs" style="left:397px;top:27px" width="18" height="18" viewBox="0 0 18 18">
<rect x="1" y="1" width="13" height="13.5" fill="#1c6fc0"/>
<rect x="2.2" y="2" width="11" height="1.3" fill="#e6f0fa"/>
<rect x="2.2" y="4.5" width="3" height="9" fill="#fafcff"/>
<path d="M5.2 6 h1 M5.2 8 h1 M5.2 10 h1 M5.2 12 h1" stroke="#1c6fc0" stroke-width="0.8"/>
<path d="M12.5 12.5 L16.2 16.5" stroke="#2a78c8" stroke-width="2.2"/>
<circle cx="9.4" cy="9.5" r="4.4" fill="#d2d6da" stroke="#0e4f96" stroke-width="1.3"/>
<path d="M7 7.5 Q9 6 11.5 7.8" stroke="#fff" stroke-width="1.1" fill="none"/>
</svg>
<div class="sel" style="top:126px"></div>
<div class="vl" style="left:450px"></div><div class="vls" style="left:450px"></div><div class="vl" style="left:534px"></div><div class="vls" style="left:534px"></div><div class="vl" style="left:569px"></div><div class="vls" style="left:569px"></div><div class="vl" style="left:653px"></div><div class="vls" style="left:653px"></div><div class="vl" style="left:688px"></div><div class="vls" style="left:688px"></div><div class="vl" style="left:772px"></div><div class="vls" style="left:772px"></div><div class="vl" style="left:902px"></div><div class="vls" style="left:902px"></div><div class="vl" style="left:972px"></div><div class="vls" style="left:972px"></div><div class="vl" style="left:1042px"></div><div class="vls" style="left:1042px"></div>
<div class="rl" style="top:65px"></div><svg class="ic" style="left:378px;top:50px" width="10" height="10" viewBox="0 0 10 10"><use href="#gear"/></svg><svg class="ic" style="left:392px;top:48px" width="17" height="14" viewBox="0 0 17 14"><use href="#cart"/></svg><svg class="ic" style="left:411px;top:48px" width="14" height="14" viewBox="0 0 14 14"><use href="#cI"/></svg><div class="tc" style="left:535px;top:46px;width:34px;">1</div><div class="tc" style="left:570px;top:46px;width:83px;">135756181</div><div class="tc" style="left:654px;top:46px;width:34px;">1</div><div class="tc" style="left:689px;top:46px;width:83px;">135756181</div><div class="tc" style="left:773px;top:46px;width:129px;letter-spacing:-0.6px;">TURBOCHARGER</div><div class="rl" style="top:85px"></div><svg class="ic" style="left:378px;top:70px" width="10" height="10" viewBox="0 0 10 10"><use href="#gear"/></svg><svg class="ic" style="left:392px;top:68px" width="17" height="14" viewBox="0 0 17 14"><use href="#cart"/></svg><svg class="ic" style="left:411px;top:68px" width="14" height="14" viewBox="0 0 14 14"><use href="#cS"/></svg><svg class="ic" style="left:429px;top:68px" width="14" height="14" viewBox="0 0 14 14"><use href="#cI"/></svg><svg class="ic" style="left:454px;top:68px" width="16" height="15" viewBox="0 0 16 15"><use href="#book"/></svg><div class="tc" style="left:535px;top:66px;width:34px;">1</div><div class="tc" style="left:570px;top:66px;width:83px;">135756180</div><div class="tc" style="left:654px;top:66px;width:34px;">1</div><div class="tc" style="left:689px;top:66px;width:83px;">135756180</div><div class="tc" style="left:773px;top:66px;width:129px;letter-spacing:-0.6px;">TURBOCHARGER</div><div class="rl" style="top:105px"></div><svg class="ic" style="left:378px;top:90px" width="10" height="10" viewBox="0 0 10 10"><use href="#gear"/></svg><svg class="ic" style="left:392px;top:88px" width="17" height="14" viewBox="0 0 17 14"><use href="#cart"/></svg><svg class="ic" style="left:411px;top:88px" width="14" height="14" viewBox="0 0 14 14"><use href="#cI"/></svg><div class="tc" style="left:535px;top:86px;width:34px;">2</div><div class="tc" style="left:570px;top:86px;width:83px;">135997020</div><div class="tc" style="left:654px;top:86px;width:34px;">1</div><div class="tc" style="left:689px;top:86px;width:83px;">135997020</div><div class="tc" style="left:773px;top:86px;width:129px;letter-spacing:-0.6px;">GASKET - TURBOCHARGER</div><div class="rl" style="top:125px"></div><svg class="ic" style="left:378px;top:110px" width="10" height="10" viewBox="0 0 10 10"><use href="#gear"/></svg><svg class="ic" style="left:392px;top:108px" width="17" height="14" viewBox="0 0 17 14"><use href="#cart"/></svg><svg class="ic" style="left:411px;top:108px" width="14" height="14" viewBox="0 0 14 14"><use href="#cI"/></svg><div class="tc" style="left:535px;top:106px;width:34px;">3</div><div class="tc" style="left:570px;top:106px;width:83px;">023100008</div><div class="tc" style="left:654px;top:106px;width:34px;">4</div><div class="tc" style="left:689px;top:106px;width:83px;">023100008</div><div class="tc" style="left:773px;top:106px;width:129px;letter-spacing:-0.6px;">NUT</div><div class="rl" style="top:145px"></div><svg class="ic" style="left:378px;top:130px" width="10" height="10" viewBox="0 0 10 10"><use href="#gear"/></svg><svg class="ic" style="left:392px;top:128px" width="17" height="14" viewBox="0 0 17 14"><use href="#cartS"/></svg><svg class="ic" style="left:411px;top:128px" width="14" height="14" viewBox="0 0 14 14"><use href="#cI"/></svg><div class="tc sw" style="left:535px;top:126px;width:34px;">4</div><div class="tc sw" style="left:570px;top:126px;width:83px;">135617480</div><div class="tc sw" style="left:654px;top:126px;width:34px;">1</div><div class="tc sw" style="left:689px;top:126px;width:83px;">135617480</div><div class="tc sw" style="left:773px;top:126px;width:129px;letter-spacing:-0.6px;">EXHAUST ELBOW</div><div class="rl" style="top:165px"></div><svg class="ic" style="left:378px;top:150px" width="10" height="10" viewBox="0 0 10 10"><use href="#gear"/></svg><svg class="ic" style="left:392px;top:148px" width="17" height="14" viewBox="0 0 17 14"><use href="#cart"/></svg><svg class="ic" style="left:411px;top:148px" width="14" height="14" viewBox="0 0 14 14"><use href="#cI"/></svg><div class="tc" style="left:535px;top:146px;width:34px;">5</div><div class="tc" style="left:570px;top:146px;width:83px;">135997031</div><div class="tc" style="left:654px;top:146px;width:34px;">1</div><div class="tc" style="left:689px;top:146px;width:83px;">135997031</div><div class="tc" style="left:773px;top:146px;width:129px;letter-spacing:-0.6px;">GASKET</div><div class="rl" style="top:185px"></div><svg class="ic" style="left:378px;top:170px" width="10" height="10" viewBox="0 0 10 10"><use href="#gear"/></svg><svg class="ic" style="left:392px;top:168px" width="17" height="14" viewBox="0 0 17 14"><use href="#cart"/></svg><svg class="ic" style="left:411px;top:168px" width="14" height="14" viewBox="0 0 14 14"><use href="#cI"/></svg><div class="tc" style="left:535px;top:166px;width:34px;">6</div><div class="tc" style="left:570px;top:166px;width:83px;">010700825</div><div class="tc" style="left:654px;top:166px;width:34px;">5</div><div class="tc" style="left:689px;top:166px;width:83px;">010700825</div><div class="tc" style="left:773px;top:166px;width:129px;letter-spacing:-0.6px;">BOLT</div><div class="rl" style="top:205px"></div><svg class="ic" style="left:378px;top:190px" width="10" height="10" viewBox="0 0 10 10"><use href="#gear"/></svg><svg class="ic" style="left:392px;top:188px" width="17" height="14" viewBox="0 0 17 14"><use href="#cart"/></svg><svg class="ic" style="left:411px;top:188px" width="14" height="14" viewBox="0 0 14 14"><use href="#cI"/></svg><div class="tc" style="left:535px;top:186px;width:34px;">7</div><div class="tc" style="left:570px;top:186px;width:83px;">2314H003</div><div class="tc" style="left:654px;top:186px;width:34px;">4</div><div class="tc" style="left:689px;top:186px;width:83px;">2314H003</div><div class="tc" style="left:773px;top:186px;width:129px;letter-spacing:-0.6px;">SCREW</div><div class="rl" style="top:225px"></div><svg class="ic" style="left:378px;top:210px" width="10" height="10" viewBox="0 0 10 10"><use href="#gear"/></svg><svg class="ic" style="left:392px;top:208px" width="17" height="14" viewBox="0 0 17 14"><use href="#cart"/></svg><svg class="ic" style="left:411px;top:208px" width="14" height="14" viewBox="0 0 14 14"><use href="#cI"/></svg><svg class="ic" style="left:454px;top:208px" width="16" height="15" viewBox="0 0 16 15"><use href="#book"/></svg><div class="tc" style="left:535px;top:206px;width:34px;">7</div><div class="tc" style="left:570px;top:206px;width:83px;">011510825</div><div class="tc" style="left:654px;top:206px;width:34px;">4</div><div class="tc" style="left:689px;top:206px;width:83px;">011510825</div><div class="tc" style="left:773px;top:206px;width:129px;letter-spacing:-0.6px;">SCREW</div><div class="rl" style="top:245px"></div><svg class="ic" style="left:378px;top:230px" width="10" height="10" viewBox="0 0 10 10"><use href="#gear"/></svg><svg class="ic" style="left:392px;top:228px" width="17" height="14" viewBox="0 0 17 14"><use href="#cart"/></svg><svg class="ic" style="left:411px;top:228px" width="14" height="14" viewBox="0 0 14 14"><use href="#cI"/></svg><div class="tc" style="left:535px;top:226px;width:34px;">8</div><div class="tc" style="left:570px;top:226px;width:83px;">027100008</div><div class="tc" style="left:654px;top:226px;width:34px;">5</div><div class="tc" style="left:689px;top:226px;width:83px;">027100008</div><div class="tc" style="left:773px;top:226px;width:129px;letter-spacing:-0.6px;">WASHER</div><div class="rl" style="top:265px"></div><svg class="ic" style="left:378px;top:250px" width="10" height="10" viewBox="0 0 10 10"><use href="#gear"/></svg><svg class="ic" style="left:392px;top:248px" width="17" height="14" viewBox="0 0 17 14"><use href="#cart"/></svg><svg class="ic" style="left:411px;top:248px" width="14" height="14" viewBox="0 0 14 14"><use href="#cI"/></svg><div class="tc" style="left:535px;top:246px;width:34px;">9</div><div class="tc" style="left:570px;top:246px;width:83px;">U30976650</div><div class="tc" style="left:654px;top:246px;width:34px;">1</div><div class="tc" style="left:689px;top:246px;width:83px;">U30976650</div><div class="tc" style="left:773px;top:246px;width:129px;letter-spacing:-0.6px;">STAY</div><div class="rl" style="top:285px"></div><svg class="ic" style="left:378px;top:270px" width="10" height="10" viewBox="0 0 10 10"><use href="#gear"/></svg><svg class="ic" style="left:392px;top:268px" width="17" height="14" viewBox="0 0 17 14"><use href="#cart"/></svg><svg class="ic" style="left:411px;top:268px" width="14" height="14" viewBox="0 0 14 14"><use href="#cS"/></svg><svg class="ic" style="left:429px;top:268px" width="14" height="14" viewBox="0 0 14 14"><use href="#cI"/></svg><svg class="ic" style="left:454px;top:268px" width="16" height="15" viewBox="0 0 16 15"><use href="#book"/></svg><div class="tc" style="left:535px;top:266px;width:34px;">9</div><div class="tc" style="left:570px;top:266px;width:83px;">130976650</div><div class="tc" style="left:654px;top:266px;width:34px;">1</div><div class="tc" style="left:689px;top:266px;width:83px;">U30976650</div><div class="tc" style="left:773px;top:266px;width:129px;letter-spacing:-0.6px;">STAY</div><div class="rl" style="top:305px"></div><svg class="ic" style="left:378px;top:290px" width="10" height="10" viewBox="0 0 10 10"><use href="#gear"/></svg><svg class="ic" style="left:392px;top:288px" width="17" height="14" viewBox="0 0 17 14"><use href="#cart"/></svg><svg class="ic" style="left:411px;top:288px" width="14" height="14" viewBox="0 0 14 14"><use href="#cI"/></svg><div class="tc" style="left:535px;top:286px;width:34px;">10</div><div class="tc" style="left:570px;top:286px;width:83px;">2314H002</div><div class="tc" style="left:654px;top:286px;width:34px;">1</div><div class="tc" style="left:689px;top:286px;width:83px;">2314H002</div><div class="tc" style="left:773px;top:286px;width:129px;letter-spacing:-0.6px;">SCREW</div><div class="rl" style="top:325px"></div><svg class="ic" style="left:378px;top:310px" width="10" height="10" viewBox="0 0 10 10"><use href="#gear"/></svg><svg class="ic" style="left:392px;top:308px" width="17" height="14" viewBox="0 0 17 14"><use href="#cart"/></svg><svg class="ic" style="left:411px;top:308px" width="14" height="14" viewBox="0 0 14 14"><use href="#cI"/></svg><svg class="ic" style="left:454px;top:308px" width="16" height="15" viewBox="0 0 16 15"><use href="#book"/></svg><div class="tc" style="left:535px;top:306px;width:34px;">10</div><div class="tc" style="left:570px;top:306px;width:83px;">011510816</div><div class="tc" style="left:654px;top:306px;width:34px;">1</div><div class="tc" style="left:689px;top:306px;width:83px;">011510816</div><div class="tc" style="left:773px;top:306px;width:129px;letter-spacing:-0.6px;">SCREW</div><div class="rl" style="top:345px"></div><svg class="ic" style="left:378px;top:330px" width="10" height="10" viewBox="0 0 10 10"><use href="#gear"/></svg><svg class="ic" style="left:392px;top:328px" width="17" height="14" viewBox="0 0 17 14"><use href="#cart"/></svg><svg class="ic" style="left:411px;top:328px" width="14" height="14" viewBox="0 0 14 14"><use href="#cI"/></svg><div class="tc" style="left:535px;top:326px;width:34px;">11</div><div class="tc" style="left:570px;top:326px;width:83px;">2314H002</div><div class="tc" style="left:654px;top:326px;width:34px;">1</div><div class="tc" style="left:689px;top:326px;width:83px;">2314H002</div><div class="tc" style="left:773px;top:326px;width:129px;letter-spacing:-0.6px;">SCREW</div><div class="rl" style="top:365px"></div><svg class="ic" style="left:378px;top:350px" width="10" height="10" viewBox="0 0 10 10"><use href="#gear"/></svg><svg class="ic" style="left:392px;top:348px" width="17" height="14" viewBox="0 0 17 14"><use href="#cart"/></svg><svg class="ic" style="left:411px;top:348px" width="14" height="14" viewBox="0 0 14 14"><use href="#cI"/></svg><svg class="ic" style="left:454px;top:348px" width="16" height="15" viewBox="0 0 16 15"><use href="#book"/></svg><div class="tc" style="left:535px;top:346px;width:34px;">11</div><div class="tc" style="left:570px;top:346px;width:83px;">011510820</div><div class="tc" style="left:654px;top:346px;width:34px;">1</div><div class="tc" style="left:689px;top:346px;width:83px;">011510820</div><div class="tc" style="left:773px;top:346px;width:129px;letter-spacing:-0.6px;">SCREW</div>
<div class="abs" style="left:512px;top:321px;width:100px;height:27px;background:rgba(255,255,255,0.82)"></div>
<svg class="abs" style="left:0;top:0;opacity:0.97" width="1125" height="671" viewBox="0 0 1125 671">
<g fill="#3b6797" stroke="none">
<!-- 英 -->
<rect x="514.3" y="325.7" width="27" height="2.4"/>
<rect x="520.2" y="324.2" width="3.2" height="5.8"/>
<rect x="532.8" y="324.2" width="3.6" height="5.8"/>
<path d="M516.1 329.8 H539.6 V338.6 H516.1 Z M521.7 333.9 V337.4 H525.8 V333.9 Z M531.1 333.9 V337.4 H535.5 V333.9 Z" fill-rule="evenodd"/>
<rect x="514.3" y="338" width="27" height="2.4"/>
<path d="M525.5 339.5 L530 339.5 L519 346.2 L514 346.2 Z"/>
<path d="M527 339.5 L531.5 339.5 L542 346.2 L537 346.2 Z"/>
<!-- 金 -->
<path d="M552.5 324.2 H570.7 L575 332.3 H571 L568 327.3 H555 L552 332.3 H547.8 Z"/>
<rect x="549.5" y="331.3" width="24.1" height="2.3"/>
<rect x="549.5" y="335.1" width="24.1" height="2.3"/>
<rect x="558.9" y="331" width="4.7" height="13"/>
<path d="M549.8 338.8 L552.3 338.4 L555 343.2 L552.5 343.5 Z"/>
<path d="M572.6 338.8 L570.1 338.4 L567.4 343.2 L569.9 343.5 Z"/>
<rect x="547.8" y="343" width="27" height="2.6"/>
<!-- 狮 -->
<path d="M581.5 324.4 L585.5 324.4 L590.5 329.5 L587 332 Z"/>
<path d="M588 324.4 L592 324.4 L585 336.5 L582 334.5 Z"/>
<rect x="586.6" y="329" width="3.4" height="16.5"/>
<rect x="582" y="342.8" width="7" height="2.8"/>
<rect x="590.4" y="328" width="2.4" height="11"/>
<path d="M593.5 324.8 H596 V342 L593.8 345.6 H591.2 L593.5 341.5 Z"/>
<rect x="598" y="324.8" width="11" height="2.2"/>
<rect x="598.5" y="329.8" width="10" height="1.8"/>
<rect x="598.5" y="329.8" width="2.2" height="11"/>
<rect x="606.4" y="329.8" width="2.2" height="11"/>
<rect x="601.9" y="326.8" width="2.6" height="18.8"/>
</g>
</svg>
<div class="abs" style="left:586px;top:326px;width:26px;height:19px;overflow:hidden"><div class="tc" style="left:-16px;top:0;width:83px;opacity:0.55">2314H002</div></div>
</body></html>
